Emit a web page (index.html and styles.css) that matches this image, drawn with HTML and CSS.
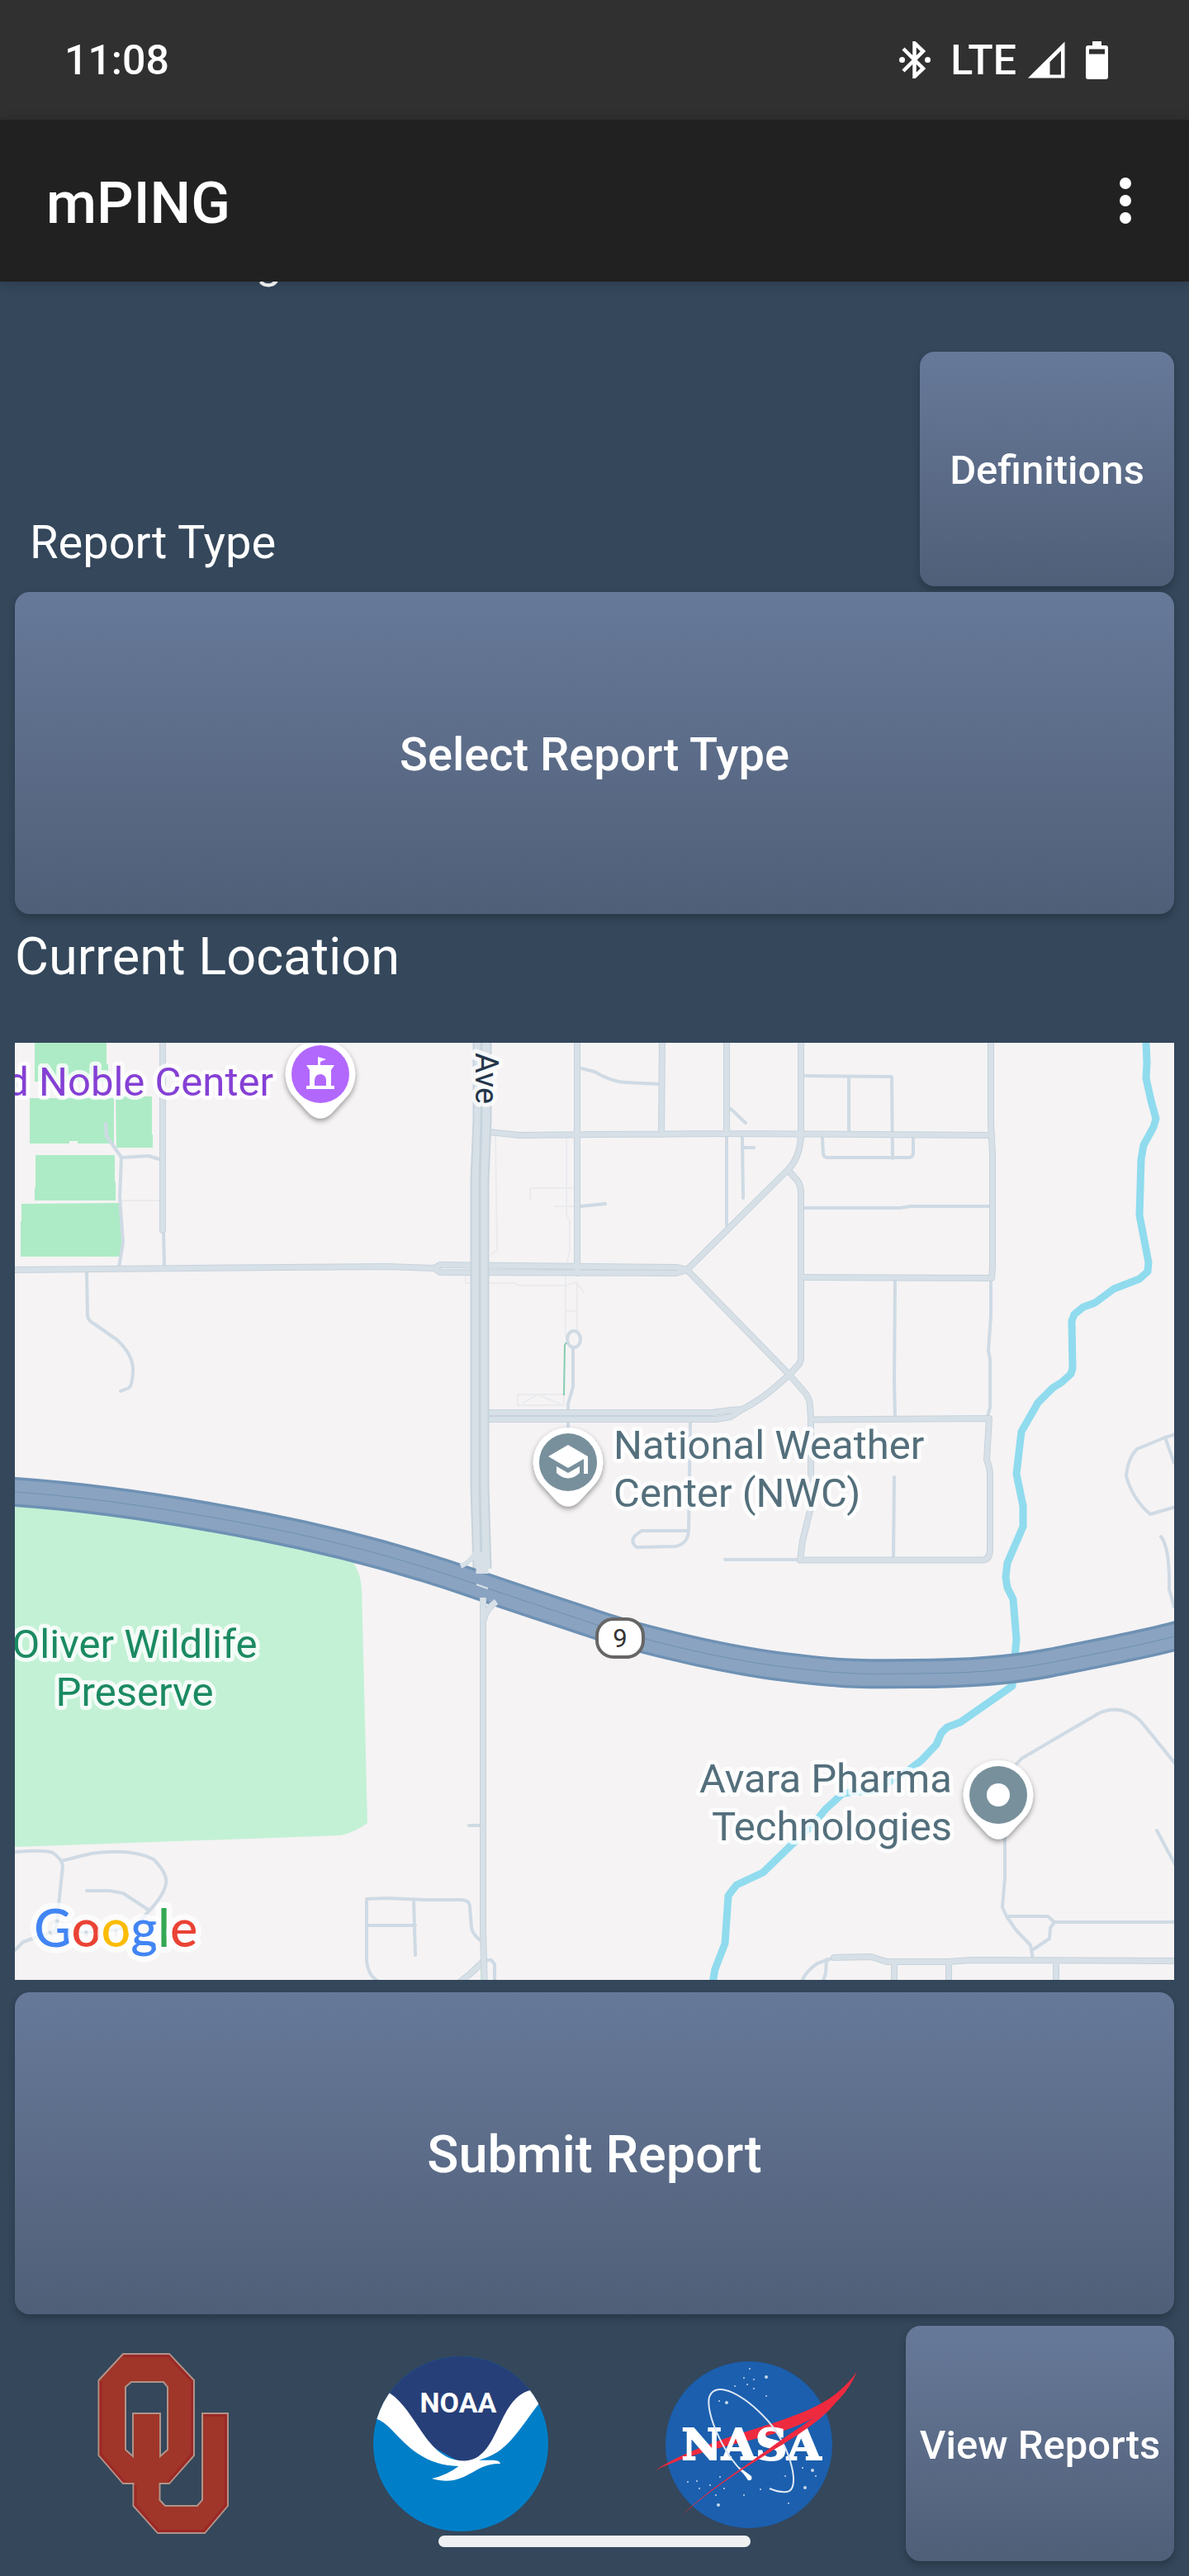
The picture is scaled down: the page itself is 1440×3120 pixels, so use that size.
FILE: index.html
```html
<!DOCTYPE html>
<html lang="en">
<head>
<meta charset="utf-8">
<meta name="viewport" content="width=device-width, initial-scale=1">
<title>mPING</title>
<link rel="stylesheet" href="styles.css">
</head>
<body>
<div class="status-bar">
  <span class="clock">11:08</span>
  <div class="status-icons">
    <svg class="icon-bluetooth" viewBox="0 0 38 45" width="38" height="45" aria-hidden="true">
      <path d="M5 9 L29 33 L18.500 43 V2 L29 12 L5 36" fill="none" stroke="#fff" stroke-width="4.500"/>
      <circle cx="3.500" cy="22.500" r="3.500" fill="#fff"/><circle cx="34.500" cy="22.500" r="3.500" fill="#fff"/>
    </svg>
    <span class="network">LTE</span>
    <svg class="icon-signal" viewBox="0 0 45 45" width="45" height="45" aria-hidden="true">
      <path fill="#fff" fill-rule="evenodd" d="M0 44.500 L44.500 .5 V44.500Z M26.500 25 V40.500 H40 V11.500Z"/>
    </svg>
    <svg class="icon-battery" viewBox="0 0 27 46" width="27" height="46" aria-hidden="true">
      <path fill="#fff" fill-rule="evenodd" d="M8 0 H19 V5 H24 Q27 5 27 8 V43 Q27 46 24 46 H3 Q0 46 0 43 V8 Q0 5 3 5 H8Z M4 9.500 V15.500 H23 V9.500Z"/>
    </svg>
  </div>
</div>
<header class="app-bar">
  <h1 class="app-title">mPING</h1>
  <button class="menu-button" type="button" aria-label="More options">
    <svg viewBox="0 0 14 56" width="14" height="56" aria-hidden="true"><g fill="#fff"><circle cx="7" cy="7" r="7"/><circle cx="7" cy="28" r="7"/><circle cx="7" cy="49" r="7"/></g></svg>
  </button>
</header>
<main class="screen">
  <p class="scrolled-line">g</p>
  <div class="type-row">
    <h2 class="type-label" id="type-label">Report Type</h2>
    <button class="btn btn-definitions" type="button">Definitions</button>
  </div>
  <button class="btn btn-large" type="button" aria-describedby="type-label">Select Report Type</button>
  <h2 class="location-label">Current Location</h2>
  <svg class="map" viewBox="18 1263 1404 1135" role="img" aria-label="Map">
    <defs>
      <filter id="pin-shadow" x="-30%" y="-30%" width="160%" height="170%"><feDropShadow dx="0" dy="3" stdDeviation="3" flood-color="#000" flood-opacity=".4"/></filter>
      <path id="pin" d="M0 -42 A42 42 0 0 1 34 25 L13 48 Q0 59 -13 48 L-34 25 A42 42 0 0 1 0 -42Z" fill="#fff" filter="url(#pin-shadow)"/>
      <path id="highway" d="M10 1806 L18 1807 C105 1813 210 1828 317 1849 S505 1894 574 1918 S685 1955 720 1967 S860 2008 950 2019 S1050 2027 1106 2027 S1220 2024 1271 2014 S1380 1993 1422 1982 L1432 1979"/>
      <g id="streets">
        <path d="M197 1255 V1490 M10 1538 L468 1534 L526 1536 L533 1532 L819 1535 L832 1538 M526 1536 L533 1541 L819 1542 L832 1538"/>
        <path d="M592 1371 L629 1375 L720 1374 L880 1373 L1201 1375 M699 1255 V1542 M802 1255 L801 1374 M880 1255 V1373"/>
        <path d="M592 1711 H862 L885 1708 L899 1707 M592 1719 H867 L885 1716 L899 1707 Q922 1695 940 1679 L956 1665 L968 1652 Q970 1648 970 1645 V1442 Q969 1434 965 1429 L954 1417 L832 1538 L956 1665 L975 1687 Q980 1693 981 1702 L982 1719 V1826 L972 1866 L969 1889 M954 1417 Q969 1402 970 1375 V1255"/>
        <path d="M1200 1255 V1361 L1202 1398 V1535 L1201 1548 L970 1547 M982 1719.500 L1198 1718 L1195 1768 Q1199 1778 1199 1786 V1876 Q1199 1889 1190 1889.500 H969"/>
        <path d="M1010 2371 L1055 2370 L1074 2376 L1147 2376 L1179 2374 L1432 2375 M1083 2377 V2410 M1149 2376 V2410 M1279 2375 V2410 M585 2376 L569 2391 L554 2403"/>
      </g>
      <g id="south-ave"><path d="M585 1935 V2340 L587 2410 M601 1940 Q588 1949 586 1962"/></g>
    </defs>
    <rect x="18" y="1263" width="1404" height="1135" fill="#f5f3f4"/>
    <g fill="#adebc6">
      <path d="M42 1263 H129 V1289 H131 V1310 H42Z M36 1330 H138 V1385 H94 V1382 H84 V1385 H36Z M140 1328 H184 V1374 H185 V1390 H141Z M43 1399 H139 V1431 H140 V1454 H42 V1438 H43Z M26 1458 L144 1457 L147 1490 V1510 L145 1522 H25 V1479 H26Z"/>
    </g>
    <path fill="#c3f1d5" d="M18 1807 C105 1813 210 1828 317 1849 L415 1872 L428 1892 Q437 1908 438 1923 L445 2208 Q430 2219 413 2223 L18 2237Z"/>
    <path d="M584 2132 V2398" stroke="#c3f1d5" stroke-width="4"/>
    <g fill="none" stroke="#ebebee" stroke-width="2">
      <path d="M600 1375 L602 1514 L594 1520 M686 1377 V1470 L690 1480 V1515 L685 1535 V1618 M642 1454 V1439 H698 M671 1461 H700 M564 1545 V1554 L623 1554 L629 1557 H686 L698 1553 L708 1566 M699 1553 V1612 M684 1588 H698 M627 1689 H683 V1702 H627Z M632 1700 L651 1689 L680 1701 M147 1454 H195"/>
    </g>
    <g fill="none" stroke="#cfdae4" stroke-width="4" stroke-linejoin="round" stroke-linecap="round">
      <path d="M128 1361 L129 1376 L147 1402 L145 1450 L149 1505 L144 1535 M147 1402 L180 1400 L196 1405 M198 1490 L199 1533"/>
      <path d="M105 1540 L106 1594 Q107 1600 115 1604 L142 1623 Q160 1640 161 1657 Q161 1677 156 1681 L146 1685"/>
      <path d="M704 1294 L720 1298 Q740 1310 757 1311 L800 1313 M703 1461 L733 1458"/>
      <ellipse cx="695" cy="1622" rx="8" ry="10"/>
      <path d="M694 1632 V1680 L688 1700 V1735"/>
      <path d="M880 1374 V1484 M899 1378 L900 1451 M899 1390 H913 M885 1343 L903 1360 M974 1463 L1090 1463 L1103 1461 H1201 M974 1303 L1080 1304 L1081 1403 M1028 1304 V1370 M996 1378 L997 1398 Q998 1402 1003 1402 H1101 Q1106 1401 1106 1397 V1378"/>
      <path d="M1084 1550 L1083 1675 L1084 1715 M1200 1550 V1594 L1197 1636 L1199 1646 V1705 L1196 1716 M878 1889 H969 M1083 1789 L1082 1888"/>
      <path d="M836 1723 L834 1854 H777 L769 1860 Q763 1868 771 1874 L818 1873 Q833 1870 834 1854"/>
      <path d="M18 2243 Q55 2240 64 2244 Q75 2252 76 2260 L72 2298 L69 2329 Q68 2339 60 2341 L28 2352 L18 2362 M74 2254 L110 2245 Q160 2238 186 2252 Q203 2269 201 2281 Q199 2295 181 2314 L165 2331 Q150 2337 115 2340 L60 2341 M105 2290 H133 L149 2293 L181 2314"/>
      <path d="M444 2300 L468 2299 L514 2301 H558 Q569 2301 569 2310 L571 2335 Q573 2344 583 2351 M444 2300 V2375 Q446 2394 459 2400 M444 2332 H503 M501 2301 L503 2368 M568 2211 H582 M590 2374 H595 L599 2379 V2400"/>
      <path d="M1230 2138 L1237 2130 L1331 2075 Q1358 2063 1381 2084 L1424 2137 M1217 2225 V2275 L1214 2310 L1219 2321 H1269 L1277 2328 H1424 M1219 2321 L1230 2337 L1248 2356 L1251 2373 M1277 2328 L1272 2335 L1271 2348 L1250 2362 M1010 2371 L990 2378 Q975 2388 970 2402 M1001 2373 L1000 2390 L996 2402"/>
      <path d="M1424 1737 L1411 1741 L1377 1755 Q1366 1766 1364 1788 Q1372 1816 1393 1834 L1424 1825 M1411 1741 L1422 1772 M1406 1861 Q1417 1875 1416 1925 L1422 1946 M1401 2217 L1424 2260"/>
    </g>
    <path d="M686 1626 L684 1629 L683 1690" fill="none" stroke="#86cdb0" stroke-width="2"/>
    <g fill="none" stroke-linejoin="round">
      <use href="#streets" stroke="#c7d3dc" stroke-width="8" stroke-linecap="round"/>
      <use href="#streets" stroke="#d7e0e7" stroke-width="6" stroke-linecap="round"/>
      <path d="M584 1255 V1357 L581 1430 V1800 L584 1900" stroke="#c7d3dc" stroke-width="23"/>
      <path d="M584 1255 V1357 L581 1430 V1800 L584 1900" stroke="#d7e0e7" stroke-width="19"/>
      <path d="M583 1263 V1357 L581 1430 V1800 L583 1890" stroke="#c7d3dc" stroke-width="3"/>
      <path d="M1388 1263 L1389 1287 L1388 1306 L1394 1333 L1400 1355 L1397 1365 L1385 1387 L1382 1404 L1380 1472 L1391 1529 L1390 1540 L1380 1549 L1349 1561 L1326 1578 L1312 1583 L1301 1592 L1298 1600 L1299 1657 L1297 1664 L1286 1674 L1275 1681 L1257 1699 L1237 1734 L1231 1785 L1239 1824 V1849 L1220 1893 L1218 1910 L1220 1923 L1227 1937 L1231 1985 L1226 2042 L1163 2086 L1147 2092 L1140 2099 L1134 2113 L1116 2132 L1099 2145 L1060 2168 L1021 2172 L1000 2191 L986 2208 L924 2268 L892 2283 L882 2296 L878 2354 L866 2385 L863 2402" stroke="#90dbee" stroke-width="9"/>
      <use href="#highway" stroke="#6e91b4" stroke-width="36"/>
      <use href="#highway" stroke="#8aa3c0" stroke-width="29"/>
      <use href="#highway" stroke="#6e91b4" stroke-width="1"/>
      <path d="M584 1880 V1906" stroke="#d7e0e7" stroke-width="15"/>
      <path d="M558 1897 Q572 1891 578 1876" stroke="#d7e0e7" stroke-width="6"/>
      <path d="M577 1919 L591 1924" stroke="#d7e0e7" stroke-width="2"/>
      <use href="#south-ave" stroke="#c7d3dc" stroke-width="8"/>
      <use href="#south-ave" stroke="#d7e0e7" stroke-width="6"/>
    </g>
    <rect x="723" y="1961" width="56" height="46" rx="20" fill="#fff" stroke="#666" stroke-width="4"/>
    <text class="map-shield" x="751" y="1995" text-anchor="middle">9</text>
    <g class="map-text">
      <text class="place-venue" x="331" y="1327" text-anchor="end">d Noble Center</text>
      <text class="place-park" x="163" y="2008" text-anchor="middle">Oliver Wildlife</text>
      <text class="place-park" x="163" y="2066" text-anchor="middle">Preserve</text>
      <text class="place-site" x="743" y="1767">National Weather</text>
      <text class="place-site" x="743" y="1825">Center (NWC)</text>
      <text class="place-site" x="1153" y="2171" text-anchor="end">Avara Pharma</text>
      <text class="place-site" x="1153" y="2229" text-anchor="end">Technologies</text>
      <text class="street-name" transform="translate(576 1275) rotate(90)">Ave</text>
    </g>
    <g transform="translate(388 1301)">
      <use href="#pin"/><circle r="35" fill="#b268fd"/>
      <path fill="#fff" fill-rule="evenodd" d="M-3 -21 L7 -18 L0 -15 V-11 H17 L13 -5 V14 H17 V18 H-17 V14 H-13 V-5 L-17 -11 H-3Z M-7 14 H7 V7 A7 7 0 0 0 -7 7Z"/>
    </g>
    <g transform="translate(688 1771)">
      <use href="#pin"/><circle r="35" fill="#78909c"/>
      <path fill="#fff" d="M0 -21 L24 -7 V14 H19 V-4 L0 7 L-24 -7Z M-14 5 L0 13 L14 5 V13 Q0 26 -14 13Z"/>
    </g>
    <g transform="translate(1209 2174)">
      <use href="#pin"/><circle r="35" fill="#78909c"/><circle r="14" fill="#fff"/>
    </g>
    <text class="google" x="41" y="2358"><tspan fill="#4285f4">G</tspan><tspan fill="#ea4335">o</tspan><tspan fill="#fbbc05">o</tspan><tspan fill="#4285f4">g</tspan><tspan fill="#34a853">l</tspan><tspan fill="#ea4335">e</tspan></text>
  </svg>
  <button class="btn btn-large" type="button">Submit Report</button>
  <div class="footer-row">
    <div class="logo">
      <svg viewBox="117 2849 162 221" width="162" height="221" role="img" aria-label="University of Oklahoma">
        <path fill="#a03529" fill-rule="evenodd" stroke="#b09388" stroke-width="2" d="M149 2851 H205 L235 2883 V2974 L205 3008 H193.500 V3028 L200 3035 H239 L245 3028 V2923 H276 V3035 L248 3068 H191 L161.500 3035 V3008 H149 L119.500 2974 V2883Z M159 2885 L152 2891 V2967 L161 2975 V2923 H194 V2975 L203 2967 V2891 L198 2885Z"/>
        <path fill="none" stroke="#9c2827" stroke-width="3" d="M150 2853.500 H204 L232.500 2884 V2973 L204 3005.500 M122 2884 V2973 L150 3005.500 M164 3010 V3034 L192 3065.500 H247 L273.500 3034 V2925.500 H247.500"/>
      </svg>
    </div>
    <div class="logo">
      <svg viewBox="450 2852 214 214" width="214" height="214" role="img" aria-label="NOAA">
        <clipPath id="noaa-disc"><circle cx="557" cy="2959" r="106"/></clipPath>
        <g clip-path="url(#noaa-disc)">
          <rect x="450" y="2852" width="214" height="214" fill="#007fc8"/>
          <path fill="#263f78" d="M450 2852 H664 V2894 L600 2970 L560 2983 L500 2950 L450 2890Z"/>
          <path fill="#fff" d="M445 2860 L471 2897.500 C505 2920 515 2979 561 2979.500 C604 2979 600 2905 641 2894 L655 2905 L651 2911 C625 2945 613 2970 579 2978.500 C590 2980 603 2976 605 2983 C573 2981 563 3013 522 3001 Q540 2997 554.500 2986 C495 2985 478 2936 455.500 2929 L440 2930Z"/>
        </g>
        <text class="noaa-name" x="554" y="2921" text-anchor="middle">NOAA</text>
      </svg>
    </div>
    <div class="logo">
      <svg viewBox="795 2852 246 214" width="246" height="214" role="img" aria-label="NASA">
        <circle cx="908" cy="2960" r="101" fill="#1b5fae"/>
        <g fill="#c6d7ec">
          <circle cx="909" cy="2868" r="1"/><circle cx="929" cy="2878" r="2"/><circle cx="902" cy="2879" r="1"/><circle cx="914" cy="2881" r="1"/><circle cx="906" cy="2887" r="1"/><circle cx="891" cy="2889" r="1"/><circle cx="914" cy="2892" r="1"/><circle cx="929" cy="2901" r="1"/><circle cx="881" cy="2909" r="2"/><circle cx="872" cy="2907" r="1"/><circle cx="834" cy="3005" r="1"/><circle cx="845" cy="3004" r="1"/><circle cx="848" cy="3013" r="1"/><circle cx="861" cy="3009" r="1"/><circle cx="873" cy="2999" r="1"/><circle cx="878" cy="3013" r="1"/><circle cx="868" cy="3021" r="1"/><circle cx="871" cy="3033" r="2"/><circle cx="902" cy="3021" r="1"/><circle cx="922" cy="3014" r="1"/><circle cx="956" cy="3031" r="1"/><circle cx="973" cy="2988" r="1"/><circle cx="985" cy="2991" r="2"/><circle cx="989" cy="2998" r="1"/><circle cx="976" cy="3012" r="2"/><circle cx="952" cy="2998" r="1"/>
        </g>
        <path fill="#ee2a3f" d="M1039 2871 C1012 2910 974 2921 934 2935 C885 2950 830 2967 795 2991 C835 2971 890 2960 934 2948 Q970 2938 994 2923 Q1025 2905 1039 2871Z"/>
        <text class="nasa-name" x="911" y="2978" text-anchor="middle">NASA</text>
        <path fill="none" stroke="#dfe8f4" stroke-width="2" d="M908 3000 C878 2975 855 2922 860 2902 C868 2881 902 2899 931 2931 C960 2965 971 3015 954 3017 Q944 3018 933 3013"/>
        <path fill="#fff" d="M896 2987 L911 2998 Q913 3004 907 3003Z"/>
        <path fill="#ee2a3f" d="M1022 2895 C1000 2920 980 2932 946 2955 C900 2989 850 3020 823 3050 C848 3024 895 2992 950 2959 C985 2937 1010 2919 1022 2895Z"/>
      </svg>
    </div>
    <button class="btn btn-view" type="button">View Reports</button>
  </div>
</main>
<div class="gesture-bar"></div>
</body>
</html>
```

FILE: styles.css
```css
* {
  box-sizing: border-box;
}

body {
  position: relative;
  margin: 0;
  background: #34475b;
  color: #fff;
  font-family: Roboto, "Liberation Sans", sans-serif;
}

h1,
h2,
p {
  margin: 0;
  font-weight: 400;
}

button {
  border: 0;
  padding: 0;
  background: none;
  color: inherit;
  font: inherit;
}

.status-bar {
  display: flex;
  align-items: center;
  justify-content: space-between;
  height: 145px;
  padding: 0 98px 0 78px;
  background: #303030;
  font-size: 50px;
  font-weight: 500;
  line-height: 58px;
}

.status-icons {
  display: flex;
  align-items: center;
}

.network {
  margin: 0 14px 0 24px;
}

.icon-battery {
  margin-left: 25px;
}

.app-bar {
  position: relative;
  z-index: 1;
  display: flex;
  align-items: center;
  justify-content: space-between;
  height: 196px;
  padding: 6px 70px 0 56px;
  background: #212121;
  box-shadow: 0 2px 14px rgba(0, 0, 0, 0.2);
}

.app-title {
  font-size: 70px;
  font-weight: 500;
  line-height: 82px;
}

.menu-button {
  display: flex;
  margin-bottom: 6px;
}

.screen {
  display: flex;
  flex-direction: column;
  padding: 0 18px 18px;
}

.scrolled-line {
  margin: -57px 0 76px;
  padding-left: 292px;
  font-size: 56px;
  line-height: 66px;
}

.type-row {
  display: flex;
  align-items: flex-end;
  justify-content: space-between;
  margin-bottom: 7px;
}

.type-label {
  padding: 0 0 20px 18px;
  font-size: 56px;
  line-height: 66px;
}

.location-label {
  margin: 15px 0 67px;
  font-size: 63px;
  line-height: 74px;
}

.btn {
  padding-top: 3px;
  border-radius: 18px;
  background: linear-gradient(#677999, #505f78);
  box-shadow: 0 5px 10px rgba(0, 0, 0, 0.22);
  font-size: 49px;
  font-weight: 500;
}

.btn-definitions {
  width: 308px;
  height: 284px;
}

.btn-large {
  height: 390px;
  font-size: 56px;
}

.map {
  display: block;
  width: 100%;
  height: auto;
  margin-bottom: 15px;
}

.map + .btn-large {
  font-size: 63px;
}

.map-text text {
  font-size: 49px;
  stroke: #fff;
  stroke-opacity: 0.8;
  stroke-width: 10px;
  stroke-linejoin: round;
  paint-order: stroke;
}

.place-venue {
  fill: #8540d4;
}

.place-park {
  fill: #1b8a62;
}

.place-site {
  fill: #546f7c;
}

.map-text .street-name {
  fill: #24364a;
  font-size: 38px;
}

.map-shield {
  fill: #333;
  font-size: 31px;
}

.google {
  font-family: Lato, sans-serif;
  font-size: 63px;
  font-weight: 500;
  stroke: #fff;
  stroke-opacity: 0.7;
  stroke-width: 14px;
  stroke-linejoin: round;
  paint-order: stroke;
}

.footer-row {
  display: flex;
  margin-top: 14px;
}

.logo {
  display: flex;
  flex: 1;
  align-items: center;
  justify-content: center;
}

.noaa-name {
  fill: #fff;
  font-family: Roboto, sans-serif;
  font-size: 34px;
  font-weight: 700;
}

.nasa-name {
  fill: #fff;
  stroke: #fff;
  stroke-width: 2px;
  font-family: "DejaVu Serif", serif;
  font-size: 53px;
  font-weight: 700;
}

.btn-view {
  width: 325px;
  height: 285px;
}

.gesture-bar {
  position: absolute;
  bottom: 35px;
  left: 50%;
  z-index: 2;
  width: 378px;
  height: 14px;
  margin-left: -189px;
  border-radius: 7px;
  background: #eff0f2;
}
```
